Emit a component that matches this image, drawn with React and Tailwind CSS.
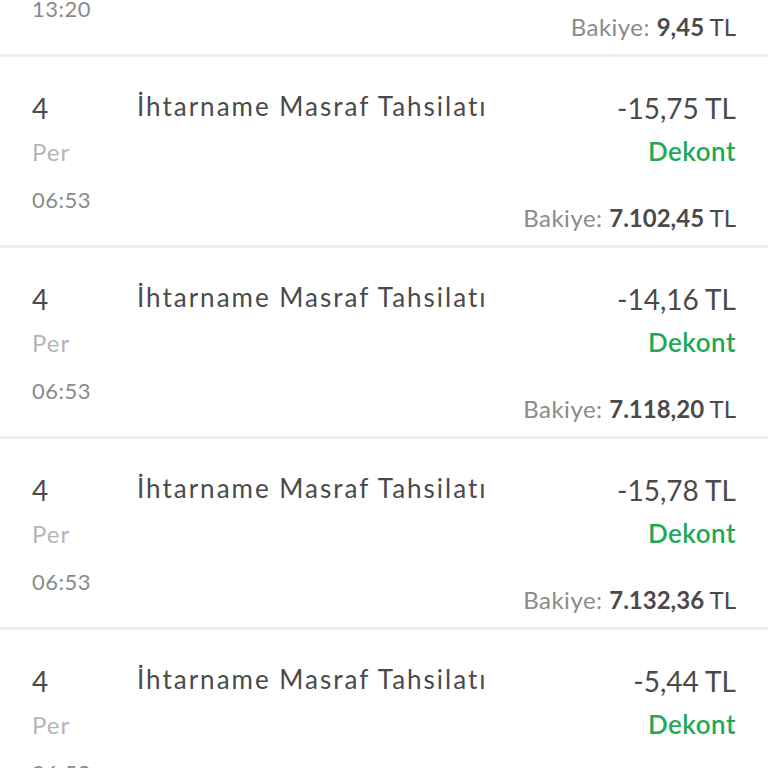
import React from 'react';

const ROWS = [
  { day: '4', weekday: 'Per', time: '13:20', title: 'İhtarname Masraf Tahsilatı', amount: '-7.093,00', balance: '9,45' },
  { day: '4', weekday: 'Per', time: '06:53', title: 'İhtarname Masraf Tahsilatı', amount: '-15,75', balance: '7.102,45' },
  { day: '4', weekday: 'Per', time: '06:53', title: 'İhtarname Masraf Tahsilatı', amount: '-14,16', balance: '7.118,20' },
  { day: '4', weekday: 'Per', time: '06:53', title: 'İhtarname Masraf Tahsilatı', amount: '-15,78', balance: '7.132,36' },
  { day: '4', weekday: 'Per', time: '06:53', title: 'İhtarname Masraf Tahsilatı', amount: '-5,44', balance: '7.137,80' },
];

function Row({ row }) {
  return (
    <div>
      <div className="flex h-[188px] px-8 pt-[33px]">
        {/* date column */}
        <div className="flex w-[105px] flex-col">
          <span className="text-[28px] leading-[36px] text-[#4a4a4a]">{row.day}</span>
          <span className="mt-[6px] text-[24px] leading-[40px] tracking-[1px] text-[#b5b5b5]">{row.weekday}</span>
          <span className="mt-[10px] text-[22px] leading-[36px] tracking-[0.5px] text-[#8a8a8a]">{row.time}</span>
        </div>

        {/* description */}
        <div className="flex-1 text-[26px] leading-[32px] tracking-[2px] text-[#4a4a4a]">{row.title}</div>

        {/* amount column */}
        <div className="flex flex-col items-end">
          <span className="text-[28px] leading-[36px] text-[#4a4a4a]">{row.amount} TL</span>
          <span className="mt-[5px] text-[26px] font-semibold leading-[40px] tracking-[0.5px] text-[#1fa855]">Dekont</span>
          <div className="mt-auto pb-[7px] leading-[34px] text-[#4a4a4a]">
            <span className="text-[24px] tracking-[0.5px] text-[#8a8a8a]">Bakiye: </span>
            <span className="text-[24px] font-bold">{row.balance}</span>
            <span className="text-[24px]"> TL</span>
          </div>
        </div>
      </div>
      <div className="h-[3px] bg-[#efefef]" />
    </div>
  );
}

export default function App() {
  return (
    <div className="h-[768px] w-[768px] overflow-hidden bg-white font-['Lato',sans-serif]">
      <div className="-mt-[134px]">
        {ROWS.map((row, i) => (
          <Row key={i} row={row} />
        ))}
      </div>
    </div>
  );
}
